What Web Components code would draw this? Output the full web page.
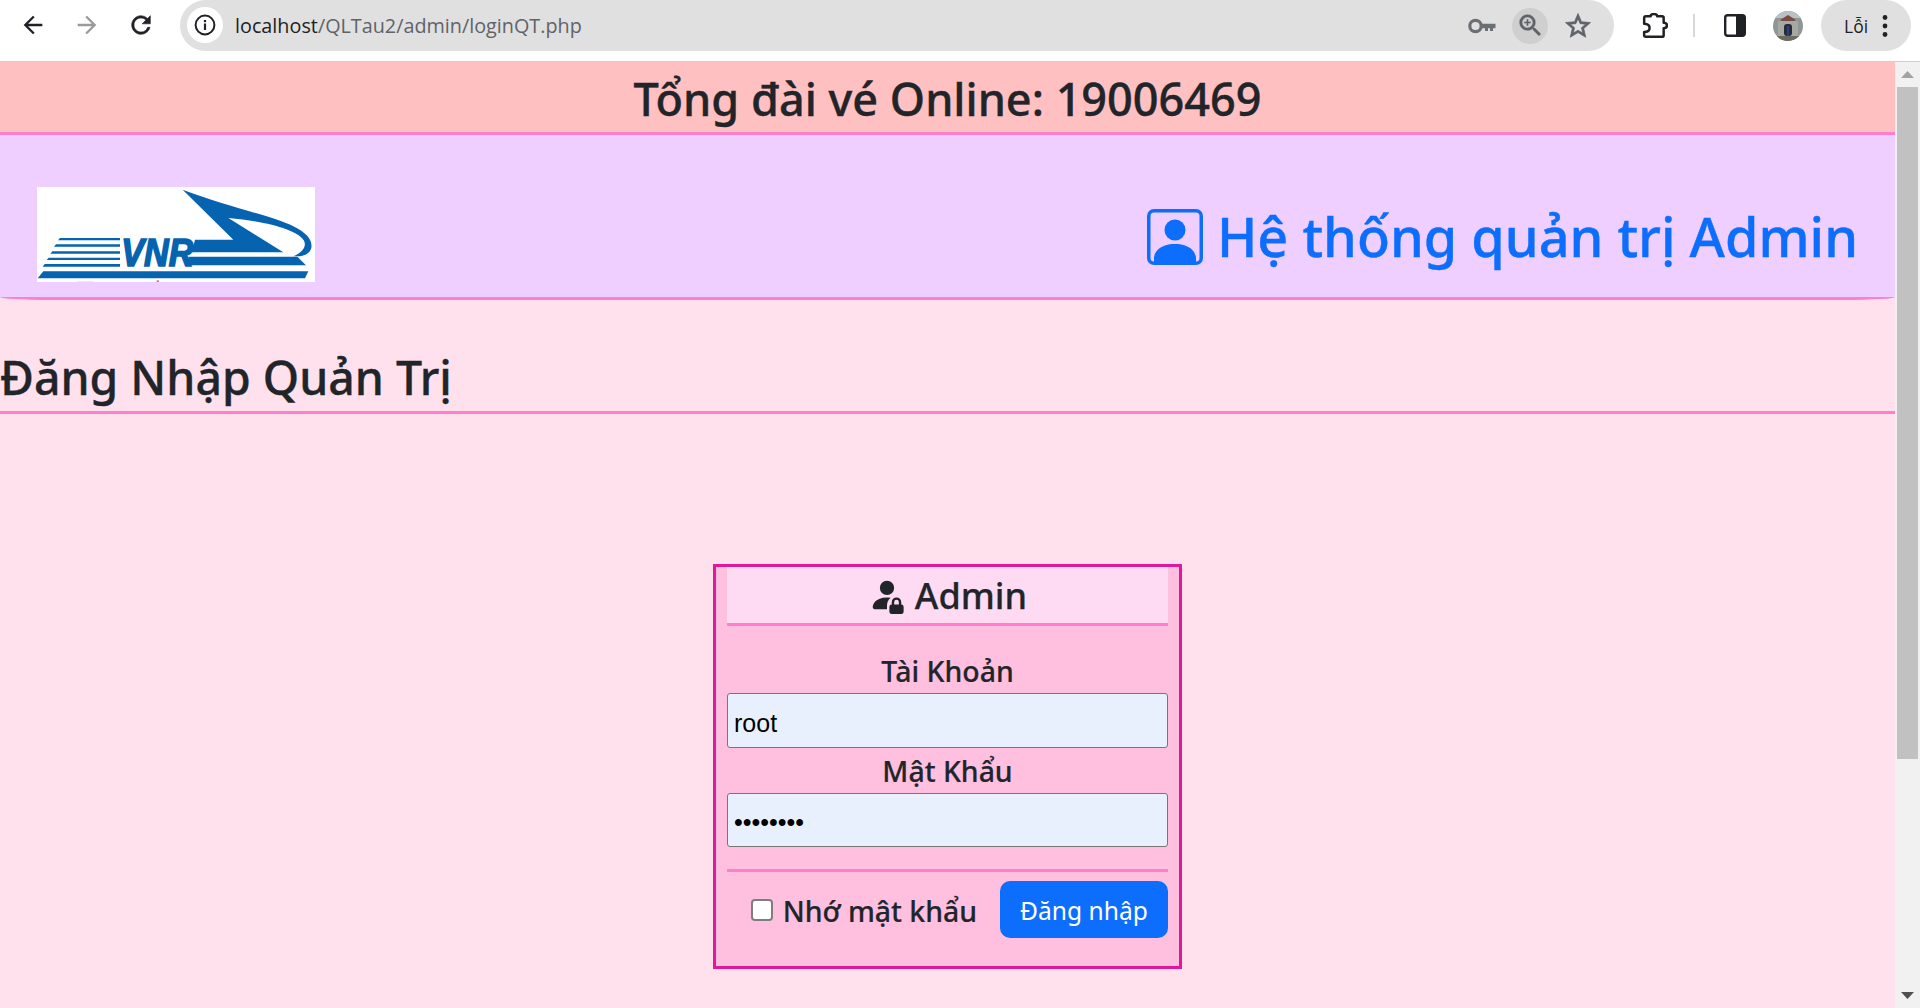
<!DOCTYPE html>
<html lang="vi"><head><meta charset="utf-8"><title>Đăng Nhập Quản Trị</title>
<style>
html,body{margin:0;padding:0;height:1008px;overflow:hidden;background:#fff;font-family:"Noto Sans","Open Sans",sans-serif;color:#212529}
#app{display:flex;flex-direction:column;height:1008px}
#view{display:flex;flex:1;min-height:0}
#page{flex:1;min-width:0;display:flex;flex-direction:column;background:#fee1ed;overflow:hidden}
</style></head><body>
<div id="app">
<browser-bar></browser-bar>
<div id="view">
<div id="page">
<hotline-banner>Tổng đài vé Online: 19006469</hotline-banner>
<site-header>Hệ thống quản trị Admin</site-header>
<page-title>Đăng Nhập Quản Trị</page-title>
<login-card></login-card>
</div>
<fake-scrollbar></fake-scrollbar>
</div>
</div>
<script>
function def(name,html){customElements.define(name,class extends HTMLElement{constructor(){super();this.attachShadow({mode:'open'}).innerHTML=html}})}
def('browser-bar',`<style>
:host{display:flex;height:61px;background:#fff;border-bottom:1px solid #cfcfcf;box-sizing:content-box;align-items:flex-start;flex:none;font-family:"Open Sans",sans-serif;padding-left:6px}
.nav{width:54px;height:50px;display:flex;align-items:center;justify-content:center}
.omni{flex:1;height:51px;margin-left:12px;background:#e0e0e0;border-radius:26px;display:flex;align-items:center;padding:0 18px 0 7px;box-sizing:border-box;min-width:0}
.info{width:36px;height:36px;border-radius:50%;background:#fff;display:flex;align-items:center;justify-content:center;flex:none;margin-top:-1px}
.url{margin-left:12px;font-size:19.8px;color:#5f6368;flex:1;white-space:nowrap;margin-top:-1px}
.url b{font-weight:400;color:#202124}
.ico{width:36px;height:36px;display:flex;align-items:center;justify-content:center;margin-left:12px;border-radius:50%;flex:none}
.zoom{background:#cfcfcf}
.box{width:50px;height:51px;display:flex;align-items:center;justify-content:center;flex:none}
.sep{width:2px;height:23px;background:#d8d8d8;margin:14px 15px 0 13px;flex:none}
.ava{width:30px;height:30px;margin:11px 18px 0 13px;flex:none;border-radius:50%;overflow:hidden}
.pill{width:90px;height:51px;border-radius:26px;background:#e0e0e0;margin-right:9px;display:flex;align-items:center;flex:none;box-sizing:border-box;padding-left:23px;font-size:17.5px;color:#202124}
.pill svg{margin-left:14px}
</style>
<div class="nav"><svg width="28" height="28" viewBox="0 0 24 24" fill="#202124"><path d="M20 11H7.83l5.59-5.59L12 4l-8 8 8 8 1.41-1.41L7.83 13H20v-2z"/></svg></div>
<div class="nav"><svg width="28" height="28" viewBox="0 0 24 24" fill="#9a9a9a"><path d="M4 11h12.17l-5.59-5.59L12 4l8 8-8 8-1.41-1.41L16.17 13H4v-2z"/></svg></div>
<div class="nav"><svg width="28" height="28" viewBox="0 0 24 24" fill="#202124" stroke="#202124" stroke-width=".5"><path d="M17.65 6.35A7.958 7.958 0 0 0 12 4c-4.42 0-7.99 3.58-7.99 8s3.57 8 7.99 8c3.73 0 6.84-2.55 7.73-6h-2.08A5.99 5.99 0 0 1 12 18c-3.31 0-6-2.69-6-6s2.69-6 6-6c1.66 0 3.14.69 4.22 1.78L13 11h7V4l-2.35 2.35z"/></svg></div>
<div class="omni">
<div class="info"><svg width="24" height="24" viewBox="0 0 24 24"><circle cx="12" cy="12" r="9.4" fill="none" stroke="#202124" stroke-width="2"/><rect x="10.9" y="10.5" width="2.2" height="6.5" fill="#202124"/><rect x="10.9" y="7" width="2.2" height="2.2" fill="#202124"/></svg></div>
<div class="url"><b>localhost</b>/QLTau2/admin/loginQT.php</div>
<div class="ico"><svg width="28" height="16" viewBox="0 0 28 16"><circle cx="7.5" cy="8" r="5.7" fill="none" stroke="#6b6f73" stroke-width="3.2"/><path d="M13 5.8H27.5V10.2H25V13H22V10.2H20V13H17V10.2H13Z" fill="#6b6f73"/></svg></div>
<div class="ico zoom"><svg width="29" height="29" viewBox="0 0 24 24" fill="#5f6368" stroke="#5f6368" stroke-width=".4"><path d="M15.5 14h-.79l-.28-.27A6.471 6.471 0 0 0 16 9.5 6.5 6.5 0 1 0 9.5 16c1.61 0 3.09-.59 4.23-1.57l.27.28v.79l5 4.99L20.49 19l-4.99-5zm-6 0C7.01 14 5 11.99 5 9.5S7.01 5 9.5 5 14 7.01 14 9.5 11.99 14 9.5 14z"/><path d="M12 10h-2v2H9v-2H7V9h2V7h1v2h2v1z"/></svg></div>
<div class="ico"><svg width="30" height="30" viewBox="0 0 24 24" fill="#5f6368" stroke="#5f6368" stroke-width=".6"><path d="M22 9.24l-7.19-.62L12 2 9.19 8.63 2 9.24l5.46 4.73L5.82 21 12 17.27 18.18 21l-1.63-7.03L22 9.24zM12 15.4l-3.76 2.27 1-4.28-3.32-2.88 4.38-.38L12 6.1l1.71 4.04 4.38.38-3.32 2.88 1 4.28L12 15.4z"/></svg></div>
</div>
<div class="box" style="margin-left:16px"><svg width="26" height="26" viewBox="0 0 24 24" fill="none" stroke="#202124" stroke-width="2.3" stroke-linejoin="round"><path d="M2 10V4.5Q2 3 3.5 3H8Q8 1 11 1T14 3H18.5Q20 3 20 4.5V9Q23 9 23 11.5T20 14V20.5Q20 22 18.5 22H3.5Q2 22 2 20.5V17.5Q7 17.5 7 13.8T2 10Z"/></svg></div>
<div class="sep"></div>
<div class="box"><svg width="22" height="23" viewBox="0 0 22 23"><rect x="1.2" y="1.2" width="19.6" height="20.6" rx="2.5" fill="#fff" stroke="#202124" stroke-width="2.4"/><path d="M12 1.2H18.3Q20.8 1.2 20.8 3.7V19.3Q20.8 21.8 18.3 21.8H12Z" fill="#202124"/></svg></div>
<div class="ava"><svg width="30" height="30" viewBox="0 0 30 30"><rect width="30" height="30" fill="#8f9694"/><rect width="30" height="7" fill="#b9c1c6"/><path d="M7 9L15 4L23 9L21 10H9Z" fill="#7a4a44"/><rect x="5" y="10" width="20" height="15" fill="#a6a8a4"/><rect x="11" y="13" width="8" height="12" rx="3" fill="#2a2a33"/><rect x="13.8" y="15" width="2.4" height="10" fill="#27408b"/><rect x="0" y="25" width="30" height="5" fill="#6d6a60"/></svg></div>
<div class="pill">Lỗi<svg width="6" height="24" viewBox="0 0 6 24" fill="#202124"><circle cx="3" cy="3.5" r="2.4"/><circle cx="3" cy="12" r="2.4"/><circle cx="3" cy="20.5" r="2.4"/></svg></div>`);
def('hotline-banner',`<style>
:host{display:block;flex:none;height:70px;box-sizing:content-box;background:#ffc0c1;border-bottom:3px solid #ff7fcc;text-align:center;font-size:45px;font-weight:500;line-height:74px;color:#212529;-webkit-text-stroke:.4px #212529;overflow:hidden}
</style><slot></slot>`);
def('site-header',`<style>
:host{display:flex;flex:none;box-sizing:border-box;height:165px;background:#efcfff;border-bottom:3px solid #ff7fcc;border-radius:0 0 50px 50px/0 0 3px 3px;justify-content:space-between;align-items:flex-start;padding:52px 37px 0}
.logo{width:278px;height:95px;background:#fff;display:block;flex:none}
h1{margin:20px 0 0;height:60px;font-size:54px;font-weight:500;line-height:60px;color:#0d6efd;display:flex;align-items:center;gap:14px}
h1 span{-webkit-text-stroke:.4px #0d6efd;margin-top:-2px}
h1 svg{flex:none;margin-left:-1px}
</style>
<svg class="logo" viewBox="51 37 834 285" fill="#0563b0">
<path d="M70 290H865L855 311H53Z"/>
<path d="M120 190H300V197H114Z"/><path d="M108 209H300V216H102Z"/><path d="M97 230H300V237H91Z"/><path d="M86 249H300V256H80Z"/><path d="M74 268H300V276H68Z"/>
<text x="304" y="275" font-family="'Liberation Sans',sans-serif" font-weight="700" font-style="italic" font-size="118" stroke="#0563b0" stroke-width="5" textLength="216" lengthAdjust="spacingAndGlyphs">VNR</text>
<path d="M488 45C620 95 760 125 820 155C860 175 878 195 874 220C870 235 855 243 838 245H820C850 232 862 212 850 195C830 165 740 140 625 130L790 233H515L525 195H640Z"/>
<path d="M506 246H832L858 272H500Z"/>
<path d="M170 319h50v3h-50z" fill="#fae6e6"/><path d="M410 317h7v5h-7z" fill="#e86a6a"/>
</svg>
<h1><svg width="56" height="56" viewBox="0 0 16 16" fill="currentColor"><path d="M11 6a3 3 0 1 1-6 0 3 3 0 0 1 6 0z"/><path d="M2 0a2 2 0 0 0-2 2v12a2 2 0 0 0 2 2h12a2 2 0 0 0 2-2V2a2 2 0 0 0-2-2H2zm12 1a1 1 0 0 1 1 1v12a1 1 0 0 1-1 1v-1c0-1-1-4-6-4s-6 3-6 4v1a1 1 0 0 1-1-1V2a1 1 0 0 1 1-1h12z"/></svg><span><slot></slot></span></h1>`);
def('page-title',`<style>
:host{display:block;flex:none;height:114px;box-sizing:border-box;border-bottom:3px solid #ff7fcc;padding-top:50px;font-size:46.4px;font-weight:500;line-height:54px;color:#212529;-webkit-text-stroke:.35px #212529}
</style><slot></slot>`);
def('login-card',`<style>
:host{display:flex;flex-direction:column;align-self:center;flex:none;width:469px;box-sizing:border-box;margin-top:150px;height:405px;border:3px solid #e0199a;background:#ffc0df;padding:0 11px;color:#212529}
.head{height:59px;box-sizing:border-box;flex:none;background:#fedbf3;border-bottom:3px solid #ff7fcc;display:flex;align-items:center;justify-content:center;gap:9px;font-size:36px;font-weight:500;line-height:44px;padding-top:2px}
.head span{-webkit-text-stroke:.25px #212529}
.head svg{flex:none;margin-top:-3px}
label.f{display:block;text-align:center;font-size:28.4px;font-weight:500;line-height:30px;-webkit-text-stroke:.2px #212529}
.l1{margin-top:30px;height:37px}
.l2{height:45px;padding-top:8px;box-sizing:border-box}
input.t{display:block;width:100%;box-sizing:border-box;height:55px;font-family:"Liberation Sans",Arial,sans-serif;font-size:25px;color:#000;background:#e8f0fe;border:1.25px solid #767676;border-radius:3px;padding:6px 6px 0;margin:0;outline:0}
input.p{height:54px;padding-top:4px}
hr{border:0;height:3px;margin:22px 0 9px;background:#ff7fcc;flex:none}
.row{display:flex;justify-content:flex-end;align-items:center;height:57px}
.check{display:flex;align-items:center;font-size:28.4px;font-weight:500;margin-right:23px;padding-top:2px}
.check span{-webkit-text-stroke:.2px #212529}
.check input{appearance:none;width:22px;height:22px;box-sizing:border-box;margin:-2px 10px 0 0;flex:none;background:#fff;border:2px solid #7d7d7d;border-radius:4px}
button{width:168px;height:57px;border:0;border-radius:10px;background:#0d6efd;color:#fff;font:400 24.6px "Noto Sans","Open Sans",sans-serif;padding:2px 0 0;flex:none}
</style>
<div class="head"><svg width="38" height="38" viewBox="0 0 16 16" fill="currentColor"><path d="M11 5a3 3 0 1 1-6 0 3 3 0 0 1 6 0m-9 8c0 1 1 1 1 1h5v-1a2 2 0 0 1 .01-.2 4.49 4.49 0 0 1 1.534-3.693Q8.844 9.002 8 9c-5 0-6 3-6 4m7 0a1 1 0 0 1 1-1v-1a2 2 0 1 1 4 0v1a1 1 0 0 1 1 1v2a1 1 0 0 1-1 1h-4a1 1 0 0 1-1-1zm3-3a1 1 0 0 0-1 1v1h2v-1a1 1 0 0 0-1-1"/></svg><span>Admin</span></div>
<label class="f l1">Tài Khoản</label>
<input class="t" type="text" value="root">
<label class="f l2">Mật Khẩu</label>
<input class="t p" type="password" value="12345678">
<hr>
<div class="row"><label class="check"><input type="checkbox"><span>Nhớ mật khẩu</span></label><button>Đăng nhập</button></div>`);
def('fake-scrollbar',`<style>
:host{display:flex;flex-direction:column;width:25px;flex:none;background:#f1f1f1;align-items:center}
.b{height:25px;flex:none;display:flex;align-items:center;justify-content:center}
.th{width:21px;height:672px;background:#c1c1c1;flex:none}
.s{flex:1}
</style>
<div class="b"><svg width="13" height="7" viewBox="0 0 13 7"><path d="M6.5 0L13 7H0Z" fill="#a3a3a3"/></svg></div>
<div class="th"></div><div class="s"></div>
<div class="b"><svg width="13" height="7" viewBox="0 0 13 7"><path d="M0 0H13L6.5 7Z" fill="#505050"/></svg></div>`);
</script>
</body></html>
